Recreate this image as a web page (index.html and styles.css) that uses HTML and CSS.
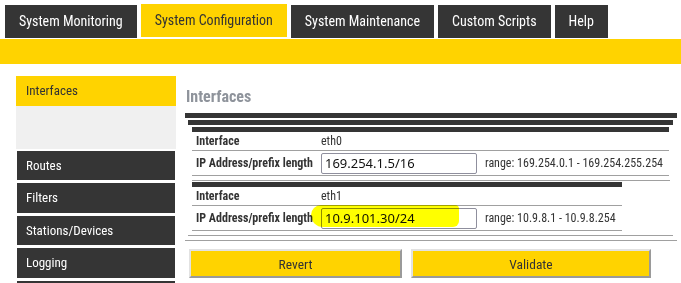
FILE: index.html
```html
<!DOCTYPE html>
<html lang="en">
  <head>
    <meta charset="UTF-8" />
    <meta name="viewport" content="width=device-width, initial-scale=1.0" />
    <title>System Configuration - Interfaces</title>
    <link rel="stylesheet" href="styles.css">
  </head>
  <body>
    <nav class="tabs">
      <a class="tab">System Monitoring</a>
      <a class="tab active">System Configuration</a>
      <a class="tab">System Maintenance</a>
      <a class="tab">Custom Scripts</a>
      <a class="tab">Help</a>
    </nav>
    <div class="band"></div>

    <div class="page">
      <aside class="menu">
        <a class="item active">Interfaces</a>
        <div class="submenu"></div>
        <a class="item">Routes</a>
        <a class="item">Filters</a>
        <a class="item">Stations/Devices</a>
        <a class="item">Logging</a>
      </aside>

      <main class="main">
        <h2>Interfaces</h2>
        <div class="section">
          <div class="group">
            <div class="iface">
              <table>
                <tr>
                  <th>Interface</th>
                  <td>eth0</td>
                  <td></td>
                </tr>
                <tr class="edit">
                  <th>IP Address/prefix length</th>
                  <td><input type="text" value="169.254.1.5/16" /></td>
                  <td>range: 169.254.0.1 - 169.254.255.254</td>
                </tr>
              </table>
            </div>
            <div class="iface">
              <table>
                <tr>
                  <th>Interface</th>
                  <td>eth1</td>
                  <td></td>
                </tr>
                <tr class="edit">
                  <th>IP Address/prefix length</th>
                  <td><input type="text" value="10.9.101.30/24" /></td>
                  <td>range: 10.9.8.1 - 10.9.8.254</td>
                </tr>
              </table>
              <span class="marker"></span>
            </div>
          </div>
        </div>
        <div class="actions">
          <button class="revert">Revert</button>
          <button class="validate">Validate</button>
        </div>
      </main>
    </div>
  </body>
</html>
```

FILE: styles.css
```css
html,
body {
  margin: 0;
  padding: 0;
}
body {
  font-family: "Roboto Condensed", Roboto, "Liberation Sans", sans-serif;
  color: #333;
  background: #fff;
  height: 283px;
  overflow: hidden;
}
.tabs {
  display: flex;
  align-items: flex-start;
  gap: 4px;
  padding: 5px 0 0 5px;
  height: 33px;
}
.tab {
  display: block;
  height: 33px;
  line-height: 33px;
  padding: 0 14px;
  background-color: #353535;
  color: white;
  font-size: 14px;
}
.tab.active {
  margin-top: -1px;
  background-color: #ffd300;
  color: #333;
}
.band {
  margin-top: 1px;
  height: 25px;
  background-color: #ffd300;
}
.page {
  display: flex;
  padding: 12px 0 0 16px;
}
.menu {
  width: 160px;
  height: 207px;
  display: flex;
  flex-direction: column;
  overflow: hidden;
}
.menu::after {
  content: "";
  flex: none;
  height: 10px;
  margin: 0 1px;
  background-color: #353535;
}
.item {
  display: block;
  flex: none;
  height: 29.5px;
  line-height: 29.5px;
  margin: 0 1px 3px;
  padding-left: 9px;
  background-color: #353535;
  color: white;
  font-size: 13px;
}
.item.active {
  margin: 0;
  padding-left: 10px;
  background-color: #ffd300;
  color: #333;
}
.submenu {
  flex: none;
  height: 43px;
  margin-bottom: 2px;
  background-color: #f0f0f0;
}
.main {
  margin-left: 9px;
  width: 492px;
}
h2 {
  margin: 11px 0 6px 1px;
  line-height: 20px;
  font-size: 16px;
  color: #8e939b;
}
.section {
  border-top: 5px solid #353535;
  border-bottom: 1px solid #a0a0a0;
  padding: 2px 4px 4px 3px;
}
.group {
  border-top: 5px solid #353535;
  border-bottom: 1px solid #a0a0a0;
  padding: 2px 3px 4px 4px;
}
.iface {
  position: relative;
}
.iface + .iface {
  margin-top: 4px;
  padding-top: 1px;
  border-top: 1px solid #a0a0a0;
}
table {
  border-collapse: collapse;
  border-top: 5px solid #353535;
  font-size: 12px;
}
th,
td {
  padding: 0 4px;
  height: 18px;
  border-bottom: 1px solid #a0a0a0;
  text-align: left;
  white-space: nowrap;
}
th {
  font-weight: bold;
}
td:last-child {
  padding-right: 6px;
}
.edit th,
.edit td {
  height: 24px;
}
input {
  display: block;
  box-sizing: border-box;
  width: 156px;
  height: 21px;
  margin: 0;
  padding: 0 3px;
  border: 1px solid #8f8f9d;
  border-radius: 2px;
  font-family: "Noto Sans", "DejaVu Sans", sans-serif;
  font-size: 13px;
  color: #111;
  background: white;
}
.marker {
  position: absolute;
  left: 119px;
  top: 24px;
  width: 148px;
  height: 22px;
  background-color: #ffff00;
  border-radius: 10px 4px 6px 12px;
  mix-blend-mode: multiply;
}
.actions {
  display: flex;
  gap: 9px;
  margin: 8px 0 0 4px;
}
button {
  height: 29px;
  background-color: #ffd300;
  border: 2px solid;
  border-color: #e2e2e2 #9a9a9a #9a9a9a #e2e2e2;
  color: #333;
  font-family: inherit;
  font-size: 13.5px;
}
.revert {
  width: 213px;
}
.validate {
  width: 240px;
}
```
